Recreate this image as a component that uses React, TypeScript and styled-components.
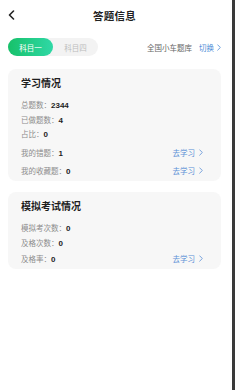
import React from "react";
import styled, { createGlobalStyle } from "styled-components";

const GlobalStyle = createGlobalStyle`
  html, body {
    margin: 0;
    padding: 0;
    background: #ffffff;
  }
  body {
    font-family: "Noto Sans CJK SC", "Noto Sans", sans-serif;
  }
`;

const Screen = styled.div`
  width: 232px;
  min-height: 390px;
  box-sizing: border-box;
  border-right: 3px solid #3a3a3a;
  background: #ffffff;
  width: 235px;
`;

const Header = styled.header`
  height: 30px;
  display: flex;
  align-items: center;
  justify-content: center;
  position: relative;
  padding-right: 3px;
`;

const BackButton = styled.span`
  position: absolute;
  left: 8px;
  top: 10px;
  display: flex;
`;

const Title = styled.h1`
  margin: 0;
  font-size: 10.5px;
  font-weight: 700;
  color: #222;
  letter-spacing: 0.3px;
`;

const TabRow = styled.div`
  margin-top: 8px;
  height: 18px;
  display: flex;
  align-items: center;
  justify-content: space-between;
  padding: 0 11px 0 8px;
`;

const Tabs = styled.div`
  display: flex;
  background: #f3f3f3;
  border-radius: 9px;
  height: 18px;
`;

const Tab = styled.div<{ $active?: boolean }>`
  width: 45px;
  height: 18px;
  border-radius: 9px;
  display: flex;
  align-items: center;
  justify-content: center;
  font-size: 7.5px;
  color: ${(p) => (p.$active ? "#ffffff" : "#bdbdbd")};
  background: ${(p) =>
    p.$active ? "linear-gradient(90deg, #17c16a 0%, #2fd8a6 100%)" : "transparent"};
`;

const BankInfo = styled.div`
  font-size: 7.5px;
  color: #666;
  display: flex;
  align-items: center;
  gap: 3px;
`;

const Switch = styled.span`
  color: #4b8ad6;
  display: flex;
  align-items: center;
  gap: 3px;
  margin-left: 4px;
`;

const Card = styled.section<{ $top: number }>`
  margin: ${(p) => p.$top}px 11px 0 8px;
  background: #f7f7f7;
  border-radius: 8px;
  padding: 7px 18px 2px 13px;
`;

const CardTitle = styled.h2`
  margin: 0 0 7.5px;
  font-size: 10px;
  line-height: 14px;
  font-weight: 700;
  color: #1e1e1e;
`;

const Row = styled.div<{ $h?: number; $top?: number }>`
  height: ${(p) => p.$h ?? 14.5}px;
  margin-top: ${(p) => p.$top ?? 0}px;
  display: flex;
  align-items: center;
  justify-content: space-between;
  font-size: 7.5px;
`;

const Label = styled.span`
  color: #8c8c8c;
`;

const Value = styled.b`
  color: #1e1e1e;
  font-family: "Liberation Sans", Arial, sans-serif;
  font-weight: 700;
  font-size: 8px;
`;

const StudyLink = styled.span`
  color: #5a8fd6;
  display: flex;
  align-items: center;
  gap: 4px;
`;

const Chevron = ({ color, w, h, sw }: { color: string; w: number; h: number; sw: number }) => (
  <svg width={w} height={h} viewBox="0 0 6 10" fill="none">
    <path d="M1 1l4 4-4 4" stroke={color} strokeWidth={sw} strokeLinecap="round" strokeLinejoin="round" />
  </svg>
);

type Item = { label: string; value: string; link?: boolean; h?: number; top?: number };

const study: Item[] = [
  { label: "总题数：", value: "2344" },
  { label: "已做题数：", value: "4" },
  { label: "占比：", value: "0" },
  { label: "我的错题：", value: "1", link: true, h: 18, top: 2 },
  { label: "我的收藏题：", value: "0", link: true, h: 18 },
];

const exam: Item[] = [
  { label: "模拟考次数：", value: "0" },
  { label: "及格次数：", value: "0" },
  { label: "及格率：", value: "0", link: true, h: 17 },
];

const InfoCard = ({ title, items, top }: { title: string; items: Item[]; top: number }) => (
  <Card $top={top}>
    <CardTitle>{title}</CardTitle>
    {items.map((it) => (
      <Row key={it.label} $h={it.h} $top={it.top}>
        <span>
          <Label>{it.label}</Label>
          <Value>{it.value}</Value>
        </span>
        {it.link && (
          <StudyLink>
            去学习
            <Chevron color="#5a8fd6" w={4} h={7} sw={1.2} />
          </StudyLink>
        )}
      </Row>
    ))}
  </Card>
);

export default function App() {
  return (
    <Screen>
      <GlobalStyle />
      <Header>
        <BackButton>
          <svg width={7} height={10} viewBox="0 0 6 10" fill="none">
            <path d="M5 1L1 5l4 4" stroke="#222" strokeWidth={1.6} strokeLinecap="round" strokeLinejoin="round" />
          </svg>
        </BackButton>
        <Title>答题信息</Title>
      </Header>
      <TabRow>
        <Tabs>
          <Tab $active>科目一</Tab>
          <Tab>科目四</Tab>
        </Tabs>
        <BankInfo>
          全国小车题库
          <Switch>
            切换
            <Chevron color="#4b8ad6" w={4} h={7} sw={1.2} />
          </Switch>
        </BankInfo>
      </TabRow>
      <InfoCard title="学习情况" items={study} top={13} />
      <InfoCard title="模拟考试情况" items={exam} top={11} />
    </Screen>
  );
}
